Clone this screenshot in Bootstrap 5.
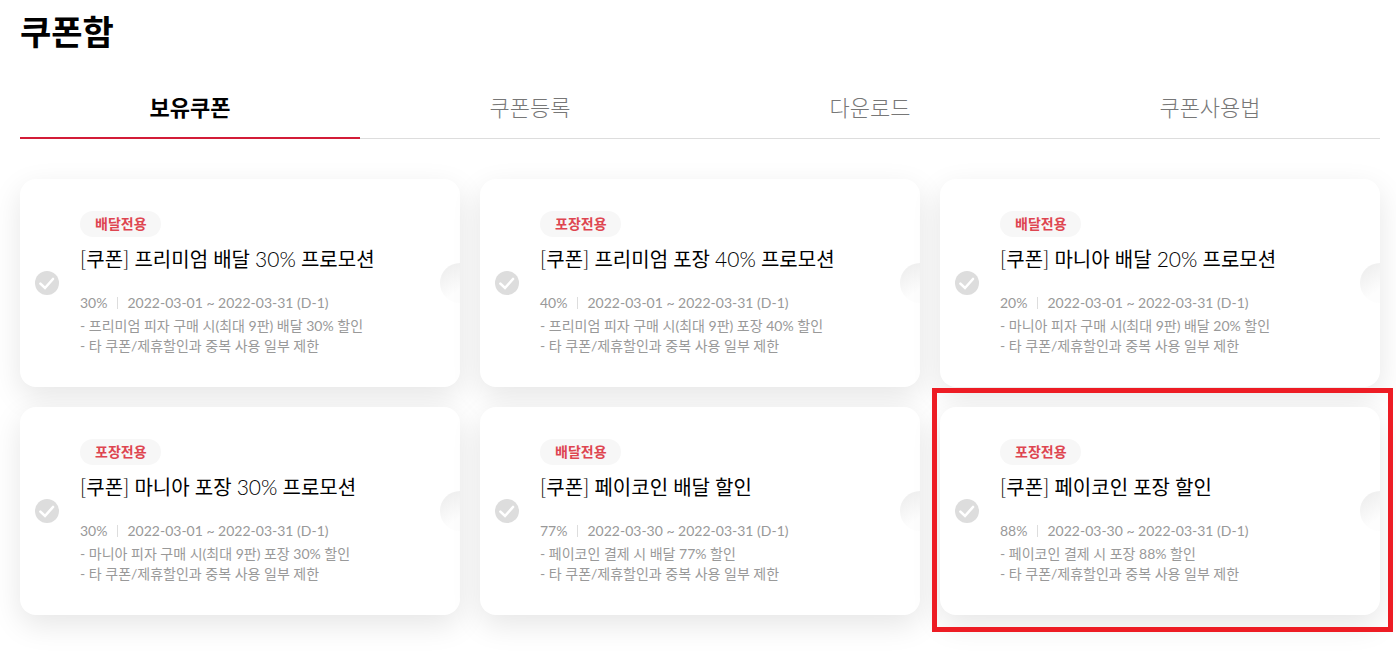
<!DOCTYPE html>
<html lang="ko">
<head>
<meta charset="utf-8">
<meta name="viewport" content="width=device-width, initial-scale=1">
<title>쿠폰함</title>
<link href="https://cdn.jsdelivr.net/npm/bootstrap@5.3.0/dist/css/bootstrap.min.css" rel="stylesheet">
<style>
  body { font-family: Lato, "Noto Sans CJK KR", sans-serif; color: #000; background: #fff; overflow-x: hidden; }
  .coupon-page { padding: 8px 16px 38px 20px; }
  .page-title { font-size: 34px; line-height: 48px; font-weight: 700; margin: 0 0 20px; }
  .coupon-tabs { border-bottom: 1px solid #ddd; margin-bottom: 40px; }
  .coupon-tabs .nav-link { width: 100%; height: 63px; margin-bottom: -1px; padding: 0; color: #777; font-size: 22px; line-height: 64px; font-weight: 300; border-bottom: 2px solid transparent; }
  .coupon-tabs .nav-link.active { color: #000; font-weight: 700; border-bottom-color: #d31c38; }
  .coupon-grid { display: grid; grid-template-columns: repeat(3, minmax(0, 1fr)); gap: 20px; }
  .coupon { position: relative; padding: 32px 24px 31px 60px; border-radius: 16px; background: #fff; box-shadow: 0 10px 30px rgba(0, 0, 0, .1); }
  .coupon::after { content: ""; position: absolute; right: 0; top: 50%; width: 20px; height: 40px; margin-top: -20px; border-radius: 20px 0 0 20px; background: linear-gradient(145deg, #ebebeb, #fdfdfd 75%); }
  .coupon-check { position: absolute; left: 15px; top: 50%; width: 24px; height: 24px; margin: -12px 0 0; border: 0; border-radius: 50%; appearance: none; background: #ddd url("data:image/svg+xml,%3Csvg xmlns='http://www.w3.org/2000/svg' viewBox='0 0 24 24'%3E%3Cpath d='M5.4 12.6l4.6 4.4 8-9' fill='none' stroke='%23fff' stroke-width='2.6' stroke-linecap='round'/%3E%3C/svg%3E"); }
  .coupon-kind { display: block; width: fit-content; padding: 0 14px 0 15px; border-radius: 13px; background: #f7f7f7; color: #de4550; font-size: 14px; line-height: 26px; font-weight: 700; }
  .coupon-name { display: block; margin: 8px 0 20px; font-size: 20px; line-height: 28px; font-weight: 400; }
  .coupon-name .thin { font-size: 21px; font-weight: 300; }
  .coupon-meta { margin: 0 0 3px; color: #999; font-size: 14px; line-height: 20px; }
  .coupon-meta span + span { margin-left: 10px; padding-left: 10px; background: linear-gradient(#ddd, #ddd) no-repeat 0 50% / 1px 12px; }
  .coupon-notes { color: #999; font-size: 14px; line-height: 20px; }
  .picked::before { content: ""; position: absolute; inset: -19px -13px -17px -8px; border: 5px solid #ed1c24; pointer-events: none; }
  @media (max-width: 991px) { .coupon-grid { grid-template-columns: minmax(0, 1fr); } }
</style>
</head>
<body>
<main class="coupon-page">
  <h1 class="page-title">쿠폰함</h1>
  <ul class="nav nav-fill nav-justified coupon-tabs">
    <li class="nav-item"><a class="nav-link active" aria-current="page" href="#">보유쿠폰</a></li>
    <li class="nav-item"><a class="nav-link" href="#">쿠폰등록</a></li>
    <li class="nav-item"><a class="nav-link" href="#">다운로드</a></li>
    <li class="nav-item"><a class="nav-link" href="#">쿠폰사용법</a></li>
  </ul>
  <div class="coupon-grid">
    <article class="coupon">
      <input class="coupon-check" type="checkbox" id="c1">
      <span class="coupon-kind">배달전용</span>
      <label class="coupon-name" for="c1"><span class="thin">[</span>쿠폰<span class="thin">]</span> 프리미엄 배달 <span class="thin">30%</span> 프로모션</label>
      <p class="coupon-meta"><span>30%</span><span>2022-03-01 ~ 2022-03-31 (D-1)</span></p>
      <ul class="list-unstyled mb-0 coupon-notes"><li>- 프리미엄 피자 구매 시(최대 9판) 배달 30% 할인</li><li>- 타 쿠폰/제휴할인과 중복 사용 일부 제한</li></ul>
    </article>
    <article class="coupon">
      <input class="coupon-check" type="checkbox" id="c2">
      <span class="coupon-kind">포장전용</span>
      <label class="coupon-name" for="c2"><span class="thin">[</span>쿠폰<span class="thin">]</span> 프리미엄 포장 <span class="thin">40%</span> 프로모션</label>
      <p class="coupon-meta"><span>40%</span><span>2022-03-01 ~ 2022-03-31 (D-1)</span></p>
      <ul class="list-unstyled mb-0 coupon-notes"><li>- 프리미엄 피자 구매 시(최대 9판) 포장 40% 할인</li><li>- 타 쿠폰/제휴할인과 중복 사용 일부 제한</li></ul>
    </article>
    <article class="coupon">
      <input class="coupon-check" type="checkbox" id="c3">
      <span class="coupon-kind">배달전용</span>
      <label class="coupon-name" for="c3"><span class="thin">[</span>쿠폰<span class="thin">]</span> 마니아 배달 <span class="thin">20%</span> 프로모션</label>
      <p class="coupon-meta"><span>20%</span><span>2022-03-01 ~ 2022-03-31 (D-1)</span></p>
      <ul class="list-unstyled mb-0 coupon-notes"><li>- 마니아 피자 구매 시(최대 9판) 배달 20% 할인</li><li>- 타 쿠폰/제휴할인과 중복 사용 일부 제한</li></ul>
    </article>
    <article class="coupon">
      <input class="coupon-check" type="checkbox" id="c4">
      <span class="coupon-kind">포장전용</span>
      <label class="coupon-name" for="c4"><span class="thin">[</span>쿠폰<span class="thin">]</span> 마니아 포장 <span class="thin">30%</span> 프로모션</label>
      <p class="coupon-meta"><span>30%</span><span>2022-03-01 ~ 2022-03-31 (D-1)</span></p>
      <ul class="list-unstyled mb-0 coupon-notes"><li>- 마니아 피자 구매 시(최대 9판) 포장 30% 할인</li><li>- 타 쿠폰/제휴할인과 중복 사용 일부 제한</li></ul>
    </article>
    <article class="coupon">
      <input class="coupon-check" type="checkbox" id="c5">
      <span class="coupon-kind">배달전용</span>
      <label class="coupon-name" for="c5"><span class="thin">[</span>쿠폰<span class="thin">]</span> 페이코인 배달 할인</label>
      <p class="coupon-meta"><span>77%</span><span>2022-03-30 ~ 2022-03-31 (D-1)</span></p>
      <ul class="list-unstyled mb-0 coupon-notes"><li>- 페이코인 결제 시 배달 77% 할인</li><li>- 타 쿠폰/제휴할인과 중복 사용 일부 제한</li></ul>
    </article>
    <article class="coupon picked">
      <input class="coupon-check" type="checkbox" id="c6">
      <span class="coupon-kind">포장전용</span>
      <label class="coupon-name" for="c6"><span class="thin">[</span>쿠폰<span class="thin">]</span> 페이코인 포장 할인</label>
      <p class="coupon-meta"><span>88%</span><span>2022-03-30 ~ 2022-03-31 (D-1)</span></p>
      <ul class="list-unstyled mb-0 coupon-notes"><li>- 페이코인 결제 시 포장 88% 할인</li><li>- 타 쿠폰/제휴할인과 중복 사용 일부 제한</li></ul>
    </article>
  </div>
</main>
<script src="https://cdn.jsdelivr.net/npm/bootstrap@5.3.0/dist/js/bootstrap.bundle.min.js"></script>
</body>
</html>
